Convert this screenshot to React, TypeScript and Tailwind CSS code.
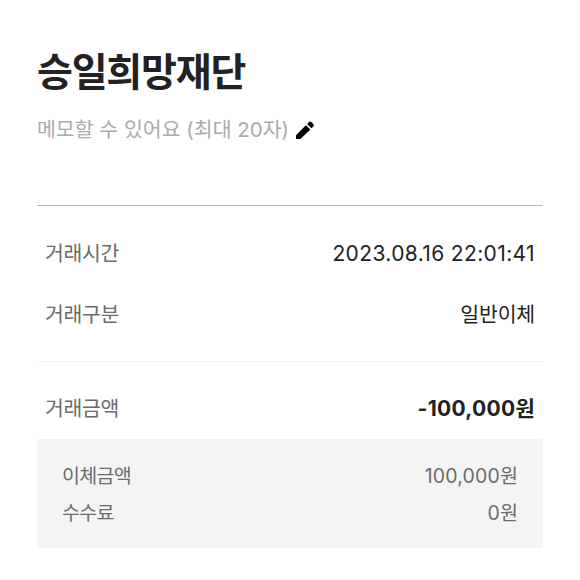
type RowProps = {
  label: string;
  value: string;
  valueClass?: string;
};

function Row({ label, value, valueClass = "" }: RowProps) {
  return (
    <div className="flex h-[61px] items-center justify-between px-2 text-[21px]">
      <span className="pt-0.5 text-[20.5px] tracking-[-0.4px] text-[#6b6b6b]">{label}</span>
      <span className={`text-[#222222] ${valueClass}`}>{value}</span>
    </div>
  );
}

function SubRow({ label, value }: RowProps) {
  return (
    <div className="flex h-[37px] items-center justify-between text-[#6b6b6b]">
      <span className="text-[19.5px] tracking-[-0.7px]">{label}</span>
      <span className="text-[19.5px] tracking-[0.15px]">{value}</span>
    </div>
  );
}

function PencilIcon() {
  return (
    <svg className="ml-1 size-6" viewBox="0 0 24 24" fill="#000000">
      <path d="M3 21v-3.8L12.9 7.2l4.5 4.4L7.4 21z" />
      <path d="M14.1 6l1.9-1.9a1.7 1.7 0 0 1 2.4 0l1.9 1.9a1.7 1.7 0 0 1 0 2.4l-1.8 1.9z" />
    </svg>
  );
}

export default function App() {
  return (
    <main className="h-[580px] w-[580px] bg-white px-[37px] pt-[44px] font-['Inter','Noto_Sans_CJK_KR',sans-serif]">
      <h1 className="h-[56px] text-[39px] leading-[56px] font-bold tracking-[-1.2px] text-[#222222]">승일희망재단</h1>
      <div className="mt-[15px] flex h-[30px] items-center">
        <span className="text-[20.5px] text-[#ababab]">메모할 수 있어요 (최대 20자)</span>
        <PencilIcon />
      </div>

      <section className="mt-[60px] border-t border-[#b8b8b8] pt-[17px]">
        <Row label="거래시간" value="2023.08.16 22:01:41" valueClass="tracking-[0.37px]" />
        <Row label="거래구분" value="일반이체" valueClass="pt-0.5 text-[20.5px] tracking-[-0.2px]" />
      </section>

      <section className="mt-[16px] border-t border-[#f3f3f3] pt-[16px]">
        <Row label="거래금액" value="-100,000원" valueClass="font-bold tracking-[0.3px]" />
        <div className="h-[109px] bg-[#f4f4f4] px-[25px] pt-[19px]">
          <SubRow label="이체금액" value="100,000원" />
          <SubRow label="수수료" value="0원" />
        </div>
      </section>
    </main>
  );
}
